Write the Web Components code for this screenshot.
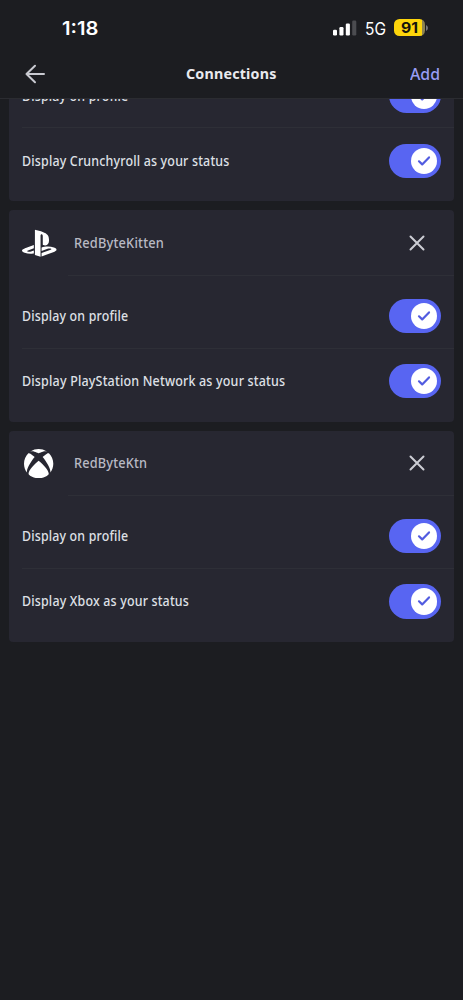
<!DOCTYPE html>
<html lang="en">
<head>
<meta charset="utf-8">
<title>Connections</title>
<style>
html,body{margin:0;height:100%;background:#1c1d21;overflow:hidden}
body{font-family:"Noto Sans",sans-serif;color:#dfe0e6}
</style>
</head>
<body>
<connections-screen></connections-screen>
<script>
const define=(name,html,setup)=>{
  customElements.define(name,class extends HTMLElement{
    connectedCallback(){
      if(this.shadowRoot)return;
      const t=document.createElement('template');
      t.innerHTML=html;
      this.attachShadow({mode:'open'}).append(t.content.cloneNode(true));
      if(setup)setup(this,this.shadowRoot);
    }
  });
};

/* Text condensed or widened to a given width. */
define('fit-text',`<style>
:host{display:block;white-space:nowrap;line-height:20px}
span{display:inline-block;transform-origin:0 50%}
</style><span><slot></slot></span>`,(el,root)=>{
  const s=root.querySelector('span'),w=+el.getAttribute('width');
  el.style.width=w+'px';
  s.style.transform='scaleX('+w/s.getBoundingClientRect().width+')';
});

define('status-bar',`<style>
:host{display:flex;align-items:center;height:55px;box-sizing:border-box;padding:0 35px 0 62px;font-family:Inter,sans-serif;color:#fff}
.time{font-size:19px;font-weight:600;margin:2px auto 0 0}
svg{display:block}
.net{font-size:17px;font-weight:400;margin:2px 8px 0 8px}
.battery{width:31px;height:17px;border-radius:5.5px;background:linear-gradient(90deg,#fdd50b 91%,#8c8350 91%);color:#15140c;display:grid;place-items:center}
.battery fit-text{font-size:14.5px;font-weight:700;margin:-1px 1px 0 0}
.tip{margin-left:1px}
</style>
<fit-text class="time" width="36.5">1:18</fit-text>
<svg width="24" height="16" viewBox="0 0 24 16"><g fill="#fff"><rect y="9.8" width="4" height="5.7" rx="1.2"/><rect x="6.4" y="7" width="4.1" height="8.5" rx="1.2"/><rect x="12.8" y="3.5" width="4.1" height="12" rx="1.2"/></g><rect x="19.2" y=".5" width="4.1" height="15" rx="1.2" fill="#4b4c50"/></svg>
<fit-text class="net" width="21">5G</fit-text>
<div class="battery"><fit-text width="17">91</fit-text></div>
<svg class="tip" width="2" height="6" viewBox="0 0 2 6"><path d="M0 0Q2 1 2 3T0 6Z" fill="#77787b"/></svg>`);

define('nav-bar',`<style>
:host{display:grid;grid-template-columns:1fr auto 1fr;align-items:center;height:44px;box-sizing:border-box;padding:0 23px 6px 25px;border-bottom:1px solid #2b2c31}
svg{display:block;margin-top:1px}
.title{font-size:15px;font-weight:700;color:#e9eaee;margin:-2px 2px 0 0;letter-spacing:.2px}
.add{justify-self:end;font-size:16.5px;font-weight:500;color:#989df5}
</style>
<svg width="21" height="20" viewBox="0 0 21 20" fill="none" stroke="#c9cad1" stroke-width="2" stroke-linecap="round" stroke-linejoin="round"><path d="M19 10H1.5M10 1.7 1.5 10 10 18.2"/></svg>
<fit-text class="title" width="90.5">Connections</fit-text>
<fit-text class="add" width="30">Add</fit-text>`);

define('toggle-switch',`<style>
:host{display:flex;justify-content:flex-end;align-items:center;width:52px;height:34.5px;box-sizing:border-box;padding-right:4px;border-radius:18px;background:#5865f2}
span{width:26.5px;height:26.5px;border-radius:50%;background:#fff;display:grid;place-items:center}
</style><span><svg width="14" height="12" viewBox="0 0 14 12" fill="none" stroke="#525ce0" stroke-width="2.2" stroke-linecap="round" stroke-linejoin="round"><path d="M2 6.3 5.2 9.4 12 2.4"/></svg></span>`);

define('setting-row',`<style>
:host{display:flex;align-items:center;justify-content:space-between;height:64.8px;box-sizing:border-box;margin-left:13px;padding-right:13px}
:host(:not(:last-child)){border-bottom:1px solid #2e2f37}
::slotted(fit-text){font-size:14px;font-weight:500;letter-spacing:.2px}
</style><slot></slot><toggle-switch></toggle-switch>`);

define('account-row',`<style>
:host{display:flex;height:65.5px;padding-left:13px}
.icon{width:34px;display:grid;place-items:center;flex:none;margin-right:12px}
.main{flex:1;display:flex;align-items:center;justify-content:space-between;padding:0 29px 0 5.5px;border-bottom:1px solid #2e2f37;font-size:14px;font-weight:500;color:#b9bac4;letter-spacing:.2px}
svg{display:block}
</style><div class="icon"><slot name="icon"></slot></div>
<div class="main"><slot></slot><svg width="16" height="16" viewBox="0 0 16 16" stroke="#cccdd4" stroke-width="2" stroke-linecap="round"><path d="M1.5 1.5 14.5 14.5M14.5 1.5 1.5 14.5"/></svg></div>`);

define('connection-card',`<style>
:host{display:block;background:#272731;border-radius:4px;padding-bottom:8.2px}
.settings{padding-top:8px}
</style><slot name="account"></slot><div class="settings"><slot></slot></div>`);

define('playstation-logo',`<style>:host,svg{display:block}</style><svg width="34.5" height="34.5" viewBox="0 0 24 24" fill="#fff"><path d="M8.985 2.596v17.548l3.915 1.261V6.688c0-.69.304-1.151.794-.991.636.181.76.814.76 1.505v5.876c2.441 1.193 4.362-.002 4.362-3.153 0-3.237-1.126-4.675-4.438-5.827-1.307-.448-3.728-1.186-5.391-1.502h-.002zm4.656 16.242l6.296-2.275c.715-.258.826-.625.246-.818-.586-.192-1.637-.139-2.357.123l-4.205 1.499v-2.385l.24-.085s1.201-.42 2.913-.615c1.696-.18 3.785.029 5.437.661 1.848.601 2.041 1.472 1.576 2.072s-1.622 1.036-1.622 1.036l-8.544 3.107v-2.297l.02-.023zM1.808 18.6c-1.9-.545-2.214-1.668-1.352-2.321.801-.585 2.159-1.051 2.159-1.051l5.616-2.013v2.313L4.206 17c-.705.271-.825.632-.239.826.586.195 1.637.15 2.343-.12L8.248 17v2.074c-.121.029-.256.044-.391.073-1.938.33-3.995.196-6.037-.479l-.012-.068z"/></svg>`);

define('xbox-logo',`<style>:host,svg{display:block}</style><svg width="29.3" height="29.3" viewBox="0 0 24 24" fill="#fff"><path d="M4.102 21.033C6.211 22.881 8.977 24 12 24c3.026 0 5.789-1.119 7.902-2.967 1.877-1.912-4.316-8.709-7.902-11.417-3.582 2.708-9.779 9.505-7.898 11.417zm11.16-14.406c2.5 2.961 7.484 10.313 6.076 12.912C23.002 17.48 24 14.861 24 12.004c0-3.34-1.365-6.362-3.57-8.536 0 0-.027-.022-.082-.042-.063-.022-.152-.045-.281-.045-.592 0-1.985.434-4.805 3.246zM3.654 3.426c-.057.02-.082.041-.086.042C1.365 5.642 0 8.664 0 12.004c0 2.854.998 5.473 2.661 7.533-1.401-2.605 3.579-9.951 6.08-12.91-2.82-2.813-4.216-3.245-4.806-3.245-.131 0-.223.021-.281.046v-.002zM12 3.551S9.055 1.828 6.755 1.746c-.903-.033-1.454.295-1.521.339C7.379.646 9.659 0 11.984 0H12c2.334 0 4.605.646 6.766 2.085-.068-.046-.615-.372-1.52-.339C14.946 1.828 12 3.545 12 3.545v.006z"/></svg>`);

define('connections-screen',`<style>
:host{display:flex;flex-direction:column;height:100vh}
main{flex:1;min-height:0;overflow:hidden}
.list{display:flex;flex-direction:column;gap:9px;padding:0 9px;margin-top:-43.4px}
</style>
<status-bar></status-bar>
<nav-bar></nav-bar>
<main><div class="list">
<connection-card>
<setting-row><fit-text width="106.3">Display on profile</fit-text></setting-row>
<setting-row><fit-text width="207.5">Display Crunchyroll as your status</fit-text></setting-row>
</connection-card>
<connection-card>
<account-row slot="account"><playstation-logo slot="icon"></playstation-logo><fit-text width="90">RedByteKitten</fit-text></account-row>
<setting-row><fit-text width="106.3">Display on profile</fit-text></setting-row>
<setting-row><fit-text width="263.3">Display PlayStation Network as your status</fit-text></setting-row>
</connection-card>
<connection-card>
<account-row slot="account"><xbox-logo slot="icon"></xbox-logo><fit-text width="73.3">RedByteKtn</fit-text></account-row>
<setting-row><fit-text width="106.3">Display on profile</fit-text></setting-row>
<setting-row><fit-text width="167">Display Xbox as your status</fit-text></setting-row>
</connection-card>
</div></main>`);
</script>
</body>
</html>
